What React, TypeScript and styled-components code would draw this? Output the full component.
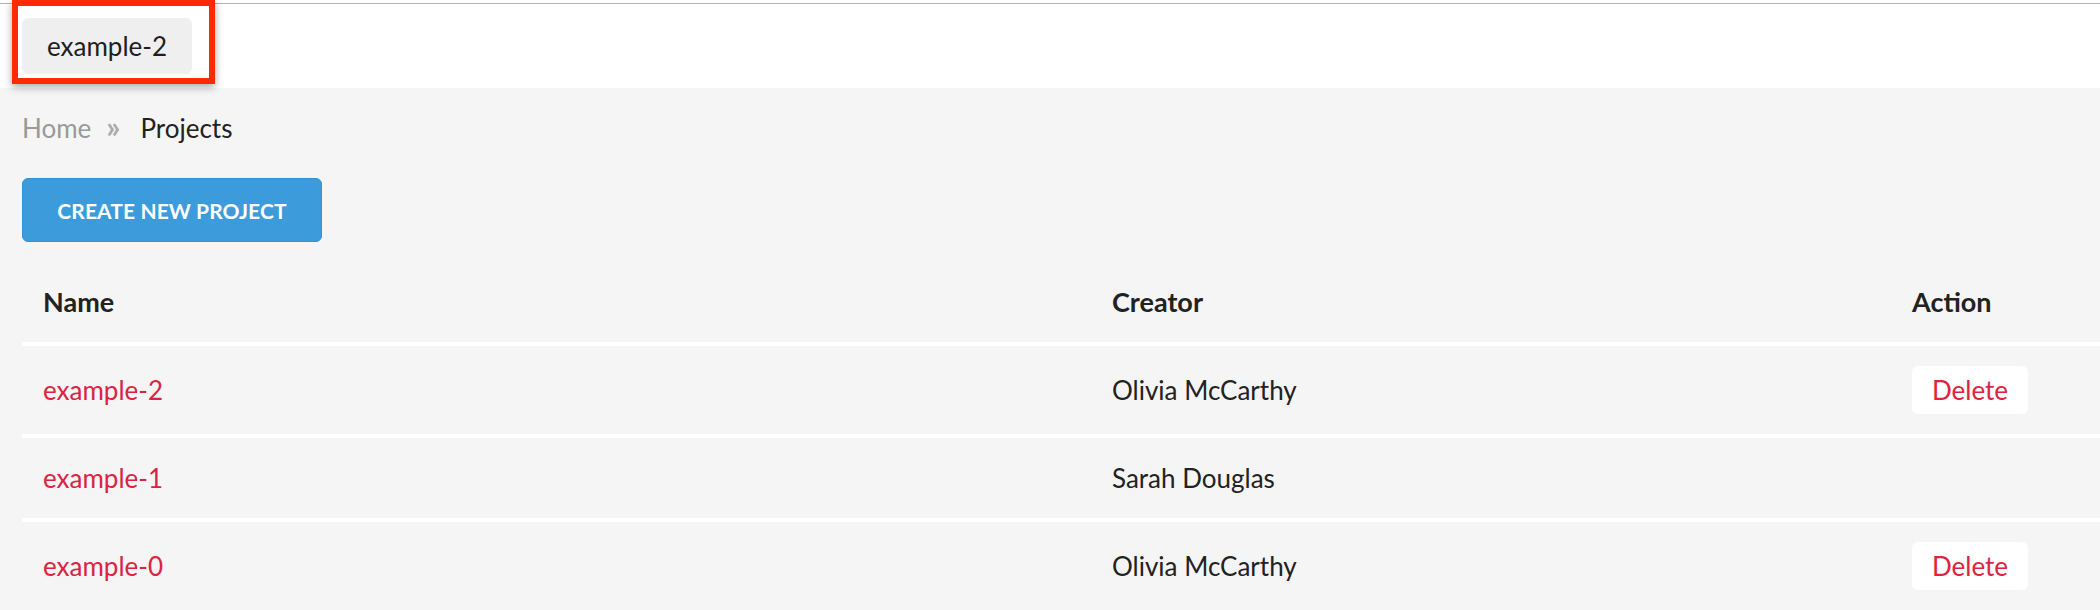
import React from "react";
import styled, { createGlobalStyle } from "styled-components";

const GlobalStyle = createGlobalStyle`
  html, body {
    margin: 0;
    padding: 0;
    background: #f5f5f5;
    font-family: Lato, "Open Sans", "Liberation Sans", sans-serif;
    color: #222;
    -webkit-font-smoothing: antialiased;
  }
  * { box-sizing: border-box; }
`;

const Page = styled.div`
  width: 2100px;
  min-height: 610px;
  overflow: hidden;
  background: #f5f5f5;
`;

const TopBar = styled.header`
  height: 88px;
  padding-left: 12px;
  background: linear-gradient(
    to bottom,
    #ffffff 0,
    #ffffff 3px,
    #b4b4b4 3px,
    #b4b4b4 4px,
    #ffffff 4px
  );
  display: flex;
  align-items: flex-start;
`;

const Highlight = styled.div`
  border: 6px solid #ff2a00;
  padding: 12px 17px 4px 4px;
  box-shadow: 0 3px 8px rgba(0, 0, 0, 0.35);
`;

const Tab = styled.div`
  width: 170px;
  height: 56px;
  border-radius: 6px;
  background: #efefef;
  display: flex;
  align-items: center;
  justify-content: center;
  font-size: 26px;
  color: #1e1e1e;
`;

const Main = styled.main`
  padding: 20px 0 0 22px;
`;

const Breadcrumb = styled.nav`
  display: flex;
  align-items: center;
  height: 40px;
  font-size: 26px;
  line-height: 40px;
`;

const Crumb = styled.span<{ $current?: boolean }>`
  color: ${(p) => (p.$current ? "#222" : "#999")};
`;

const Separator = styled.span`
  color: #aaa;
  margin: 0 20px 0 15px;
  font-size: 31px;
  font-weight: 700;
  line-height: 40px;
  position: relative;
  top: -2px;
`;

const CreateButton = styled.button`
  margin-top: 30px;
  width: 300px;
  height: 64px;
  border: 1px solid #3590cf;
  border-radius: 6px;
  background: #3c9bdb;
  color: #fff;
  font-family: Lato, "Open Sans", sans-serif;
  font-weight: 700;
  font-size: 21px;
  letter-spacing: 0.1px;
  cursor: pointer;
`;

const Table = styled.div`
  margin-top: 20px;
  display: flex;
  flex-direction: column;
`;

const Row = styled.div<{ $head?: boolean }>`
  display: grid;
  grid-template-columns: 1069px 800px 1fr;
  border-top: ${(p) => (p.$head ? "none" : "4px solid #ffffff")};
`;

const Cell = styled.div<{ $head?: boolean }>`
  padding: 20px 21px;
  min-height: 80px;
  display: flex;
  align-items: center;
  font-size: ${(p) => (p.$head ? "27px" : "26px")};
  line-height: 40px;
  font-weight: ${(p) => (p.$head ? 700 : 400)};
  color: #222;
`;

const ProjectLink = styled.a`
  color: #dc2340;
  text-decoration: none;
`;

const DeleteButton = styled.button`
  width: 116px;
  height: 48px;
  border: none;
  border-radius: 6px;
  background: #ffffff;
  color: #dc2340;
  font-family: Lato, "Open Sans", sans-serif;
  font-size: 26px;
  cursor: pointer;
`;

const projects = [
  { name: "example-2", creator: "Olivia McCarthy", canDelete: true },
  { name: "example-1", creator: "Sarah Douglas", canDelete: false },
  { name: "example-0", creator: "Olivia McCarthy", canDelete: true },
];

export default function App() {
  return (
    <Page>
      <GlobalStyle />
      <TopBar>
        <Highlight>
          <Tab>example-2</Tab>
        </Highlight>
      </TopBar>
      <Main>
        <Breadcrumb>
          <Crumb>Home</Crumb>
          <Separator>»</Separator>
          <Crumb $current>Projects</Crumb>
        </Breadcrumb>
        <CreateButton>CREATE NEW PROJECT</CreateButton>
        <Table>
          <Row $head>
            <Cell $head>Name</Cell>
            <Cell $head>Creator</Cell>
            <Cell $head>Action</Cell>
          </Row>
          {projects.map((p) => (
            <Row key={p.name}>
              <Cell>
                <ProjectLink href="#">{p.name}</ProjectLink>
              </Cell>
              <Cell>{p.creator}</Cell>
              <Cell>{p.canDelete && <DeleteButton>Delete</DeleteButton>}</Cell>
            </Row>
          ))}
        </Table>
      </Main>
    </Page>
  );
}
